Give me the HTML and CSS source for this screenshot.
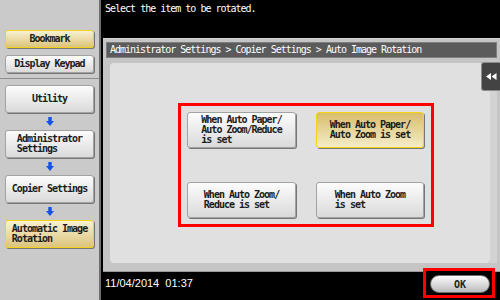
FILE: index.html
```html
<!DOCTYPE html>
<html lang="en">
<head>
    <meta charset="UTF-8">
    <title>Auto Image Rotation</title>
    <link rel="stylesheet" href="styles.css">
</head>
<body>
<div class="screen">
    <div class="side">
        <div class="side-top">
            <div class="sbtn short on"><span>Bookmark</span></div>
            <div class="sbtn short"><span>Display Keypad</span></div>
        </div>
        <div class="side-path">
            <div class="sbtn"><span>Utility</span></div>
            <div class="arrow"><svg width="8" height="9" viewBox="0 0 8 9"><path d="M2.3 0h3.4v4h2.3L4 9 0 4h2.3z"/></svg></div>
            <div class="sbtn"><span>Administrator<br>Settings</span></div>
            <div class="arrow"><svg width="8" height="9" viewBox="0 0 8 9"><path d="M2.3 0h3.4v4h2.3L4 9 0 4h2.3z"/></svg></div>
            <div class="sbtn"><span>Copier Settings</span></div>
            <div class="arrow"><svg width="8" height="9" viewBox="0 0 8 9"><path d="M2.3 0h3.4v4h2.3L4 9 0 4h2.3z"/></svg></div>
            <div class="sbtn on"><span>Automatic Image<br>Rotation</span></div>
        </div>
    </div>
    <div class="main">
        <div class="msg">Select the item to be rotated.</div>
        <div class="panel">
            <div class="crumb">Administrator Settings &gt; Copier Settings &gt; Auto Image Rotation</div>
            <div class="body">
                <div class="content">
                    <div class="choices">
                        <div class="btn"><span>When Auto Paper/<br>Auto Zoom/Reduce<br>is set</span></div>
                        <div class="btn on"><span>When Auto Paper/<br>Auto Zoom is set</span></div>
                        <div class="btn"><span>When Auto Zoom/<br>Reduce is set</span></div>
                        <div class="btn"><span>When Auto Zoom<br>is set</span></div>
                    </div>
                </div>
                <div class="track"></div>
                <div class="tab"><svg width="11" height="7" viewBox="0 0 11 7"><path d="M0 3.5L5 0v7zM5.5 3.5L10.5 0v7z"/></svg></div>
            </div>
        </div>
        <div class="foot">
            <span class="date">11/04/2014&nbsp;&nbsp;01:37</span>
            <div class="ok-mark"><div class="ok">OK</div></div>
        </div>
    </div>
</div>
</body>
</html>
```

FILE: styles.css
```css
* {
    box-sizing: border-box;
}

body {
    margin: 0;
    background-color: #000;
    font-family: "DejaVu Sans Mono", monospace;
    font-size: 10px;
    letter-spacing: -1px;
}

.screen {
    display: flex;
    width: 500px;
    height: 300px;
    overflow: hidden;
}

/* left column */
.side {
    width: 101px;
    background-color: #cacaca;
    border-right: 2px solid #6e6e6e;
}

.side-top {
    display: flex;
    flex-direction: column;
    gap: 7px;
    height: 79px;
    padding: 30px 5px 0 5px;
    border-bottom: 1px solid #8e8e8e;
}

.side-path {
    display: flex;
    flex-direction: column;
    padding: 6px 5px 0 5px;
}

.sbtn, .btn {
    display: flex;
    align-items: center;
    justify-content: center;
    border: 1px solid #a2a2a2;
    border-radius: 3px;
    background: linear-gradient(#fcfcfc, #dadada);
    box-shadow: 1px 1px 0 #767676;
    color: #1c1c1c;
    font-weight: bold;
    line-height: 10px;
}

.sbtn {
    width: 89px;
    height: 28px;
}

.sbtn.short {
    height: 18px;
}

.sbtn.on {
    border: 1.5px solid #f0d21c;
    background: linear-gradient(#f8f1d2, #dcc47c);
}

.arrow {
    display: flex;
    justify-content: center;
    align-items: center;
    height: 17px;
    fill: #1652e6;
}

/* right side */
.main {
    display: flex;
    flex-direction: column;
    flex: 1;
}

.msg {
    height: 38px;
    padding: 4px 0 0 4px;
    color: #fff;
    line-height: 10px;
}

.panel {
    height: 234px;
    margin-left: 2px;
    padding: 4px 3px 0 3px;
    background-color: #c5c5c5;
    border-top: 1px solid #d6d6d6;
    border-bottom: 1px solid #9a9a9a;
}

.crumb {
    height: 16px;
    margin-top: -1px;
    padding-left: 3px;
    background-color: #5b5b5b;
    border: 1px solid #7e7e7e;
    color: #fff;
    line-height: 14px;
}

.body {
    position: relative;
    display: flex;
    margin: 5px 0 0 4px;
}

.content {
    width: 380px;
    height: 200px;
    background-color: #e1e0e1;
    border-radius: 4px;
}

.track {
    width: 7px;
    height: 200px;
    background-color: #d3d3d3;
}

.tab {
    position: absolute;
    top: -1px;
    right: -3px;
    display: flex;
    align-items: center;
    justify-content: center;
    width: 19px;
    height: 29px;
    background-color: #434343;
    border: 1px solid #8c8c8c;
    border-right: none;
    border-radius: 3px 0 0 3px;
    fill: #fff;
}

.choices {
    display: grid;
    grid-template-columns: 109px 108px;
    grid-auto-rows: 36px;
    column-gap: 20px;
    row-gap: 34px;
    width: fit-content;
    margin: 40px 0 0 68px;
    padding: 6px 7px 6px 6px;
    border: 3px solid #ff0000;
}

.btn.on {
    border: 1.5px solid #f2d416;
    background: linear-gradient(#d9bd6c, #f4ecc8);
}

.foot {
    display: flex;
    height: 28px;
}

.date {
    padding: 5px 0 0 4px;
    color: #fff;
    font-family: "Liberation Sans", sans-serif;
    font-size: 11px;
    letter-spacing: 0;
    line-height: 13px;
}

.ok-mark {
    width: 72px;
    height: 30px;
    margin: -4px 5px 0 auto;
    padding: 4px 0 0 4px;
    background-color: #000;
    border: 3px solid #ff0000;
}

.ok {
    display: flex;
    align-items: center;
    justify-content: center;
    width: 60px;
    height: 18px;
    border: 1px solid #6e6e6e;
    border-radius: 9px;
    background: linear-gradient(#fbfbfb, #bcbcbc);
    color: #222;
    font-weight: bold;
    letter-spacing: 0;
}
```
